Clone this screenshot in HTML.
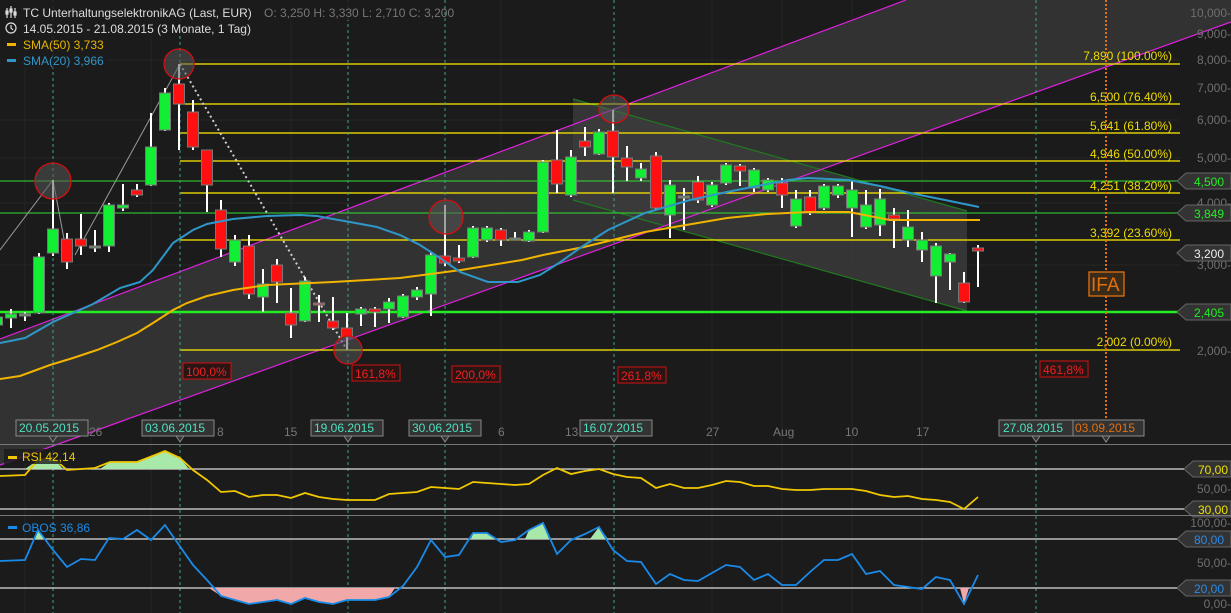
<!DOCTYPE html>
<html><head><meta charset="utf-8"><style>
body{margin:0;background:#1b1b1b;width:1231px;height:613px;overflow:hidden;font-family:"Liberation Sans",sans-serif}
svg{position:absolute;left:0;top:0}
text{font-family:"Liberation Sans",sans-serif}
</style></head><body>
<svg id="s" width="1231" height="613" viewBox="0 0 1231 613">
<rect width="1231" height="613" fill="#1b1b1b"/>
<g stroke="#262626" stroke-width="1">
<line x1="0" y1="60" x2="1180" y2="60"/><line x1="0" y1="120" x2="1180" y2="120"/><line x1="0" y1="158" x2="1180" y2="158"/><line x1="0" y1="203" x2="1180" y2="203"/><line x1="0" y1="265" x2="1180" y2="265"/><line x1="0" y1="351" x2="1180" y2="351"/>
<line x1="25" y1="0" x2="25" y2="613"/><line x1="151" y1="0" x2="151" y2="613"/><line x1="291" y1="0" x2="291" y2="613"/><line x1="501" y1="0" x2="501" y2="613"/><line x1="712" y1="0" x2="712" y2="613"/><line x1="782" y1="0" x2="782" y2="613"/><line x1="852" y1="0" x2="852" y2="613"/><line x1="922" y1="0" x2="922" y2="613"/>
</g>
<polygon points="0,339 906,0 1231,0 1231,22 0,465" fill="#353535" opacity="0.9"/>
<polygon points="573,99 967,211 967,311 573,200" fill="#3c3c3c" opacity="0.8"/>
<line x1="573" y1="99" x2="967" y2="211" stroke="#1f7a1f" stroke-width="1.2"/>
<line x1="573" y1="200" x2="967" y2="311" stroke="#1f7a1f" stroke-width="1.2"/>
<line x1="0" y1="339" x2="906" y2="0" stroke="#e020e0" stroke-width="1.2"/>
<line x1="0" y1="465" x2="1231" y2="22" stroke="#e020e0" stroke-width="1.2"/>
<g stroke="#ffee00" stroke-width="1.3">
<line x1="180" y1="64" x2="1180" y2="64"/><line x1="180" y1="104" x2="1180" y2="104"/><line x1="180" y1="133" x2="1180" y2="133"/><line x1="180" y1="161" x2="1180" y2="161"/><line x1="180" y1="193" x2="1180" y2="193"/><line x1="180" y1="240" x2="1180" y2="240"/><line x1="180" y1="350" x2="1180" y2="350"/>
</g>
<g stroke="#33dd33" stroke-width="1"><line x1="0" y1="181" x2="1180" y2="181"/><line x1="0" y1="213" x2="1180" y2="213"/></g>
<line x1="0" y1="312" x2="1180" y2="312" stroke="#22ee22" stroke-width="2.5"/>
<g fill="#eedd00" font-size="12" text-anchor="end">
<text x="1172" y="60">7,890 (100.00%)</text><text x="1172" y="101">6,500 (76.40%)</text><text x="1172" y="130">5,641 (61.80%)</text><text x="1172" y="158">4,946 (50.00%)</text><text x="1172" y="190">4,251 (38.20%)</text><text x="1172" y="237">3,392 (23.60%)</text><text x="1172" y="346">2,002 (0.00%)</text>
</g>
<g stroke="#3aa58a" stroke-width="1" stroke-dasharray="3,3">
<line x1="53" y1="0" x2="53" y2="613"/><line x1="180" y1="0" x2="180" y2="613"/><line x1="348" y1="0" x2="348" y2="613"/><line x1="445" y1="0" x2="445" y2="613"/><line x1="614" y1="0" x2="614" y2="613"/><line x1="1036" y1="0" x2="1036" y2="613"/>
</g>
<line x1="1106" y1="0" x2="1106" y2="445" stroke="#e07010" stroke-width="2" stroke-dasharray="2,2"/>
<polyline points="0,250 53,180 67,255" fill="none" stroke="#999" stroke-width="1"/>
<line x1="75" y1="255" x2="180" y2="64" stroke="#999" stroke-width="1"/>
<line x1="180" y1="64" x2="347" y2="350" stroke="#ccc" stroke-width="2" stroke-dasharray="2,3"/>
<g id="candles"></g>
<polyline fill="none" stroke="#f0b400" stroke-width="2" points="0,379 20,376 50,365 73,358 97,350 117,342 137,333 153,323 173,310 187,303 207,296 233,290 267,285 333,282 400,278 461,270 522,260 543,255 584,247 645,232 686,225 727,218 767,214 808,212 849,212 890,220 980,220"/>
<polyline fill="none" stroke="#2f97c8" stroke-width="2" points="0,343 25,338 53,322 93,304 120,288 140,282 153,270 173,243 193,230 207,224 233,219 267,216 300,215 317,216 333,219 350,222 377,227 400,235 420,245 440,258 460,272 488,282 518,282 540,275 559,263 580,248 608,230 645,213 690,200 727,192 788,180 808,178 849,180 880,186 910,193 945,200 979,207"/>
<g fill="#555" fill-opacity="0.55" stroke="#d01010" stroke-width="1.3">
<circle cx="53" cy="181" r="18"/><circle cx="179" cy="64" r="15"/><circle cx="446" cy="217" r="17"/><ellipse cx="614" cy="109" rx="15" ry="14"/><circle cx="348" cy="350" r="14"/>
</g>
<g font-size="12" fill="#ee2020">
<rect x="183" y="363" width="48" height="16" fill="#2a1515" stroke="#d01010"/><text x="186" y="376">100,0%</text>
<rect x="352" y="365" width="48" height="16" fill="#2a1515" stroke="#d01010"/><text x="355" y="378">161,8%</text>
<rect x="452" y="366" width="48" height="16" fill="#2a1515" stroke="#d01010"/><text x="455" y="379">200,0%</text>
<rect x="618" y="367" width="48" height="16" fill="#2a1515" stroke="#d01010"/><text x="621" y="380">261,8%</text>
<rect x="1040" y="361" width="48" height="16" fill="#2a1515" stroke="#d01010"/><text x="1043" y="374">461,8%</text>
</g>
<rect x="1089" y="272" width="35" height="24" fill="#3a2a18" stroke="#e07010" stroke-width="1.3"/>
<text x="1091" y="291" font-size="19" fill="#e07010">IFA</text>
<g fill="#6f6f6f" font-size="12" text-anchor="end">
<text x="1231" y="17">10,000-</text><text x="1231" y="38">9,000-</text><text x="1231" y="64">8,000-</text><text x="1231" y="92">7,000-</text><text x="1231" y="124">6,000-</text><text x="1231" y="162">5,000-</text><text x="1231" y="207">4,000-</text><text x="1231" y="269">3,000-</text><text x="1231" y="355">2,000-</text>
<text x="1231" y="493">50,00-</text><text x="1231" y="527">100,00-</text><text x="1231" y="567">50,00-</text><text x="1231" y="608">0,00-</text>
</g>
<g stroke="#666" fill="#333" stroke-width="1">
<polygon points="1177,181 1186,173 1231,173 1231,189 1186,189"/>
<polygon points="1177,213 1186,205 1231,205 1231,221 1186,221"/>
<polygon points="1177,253 1186,245 1231,245 1231,261 1186,261"/>
<polygon points="1177,312 1186,304 1231,304 1231,320 1186,320"/>
<polygon points="1184,469 1193,461 1231,461 1231,477 1193,477"/>
<polygon points="1184,509 1193,501 1231,501 1231,517 1193,517"/>
<polygon points="1177,539 1186,531 1231,531 1231,547 1186,547"/>
<polygon points="1177,588 1186,580 1231,580 1231,596 1186,596"/>
</g>
<g font-size="12" text-anchor="end">
<text x="1224" y="186" fill="#22ee22">4,500</text><text x="1224" y="218" fill="#22ee22">3,849</text><text x="1224" y="258" fill="#eee">3,200</text><text x="1224" y="317" fill="#22ee22">2,405</text>
<text x="1228" y="474" fill="#eee000">70,00</text><text x="1228" y="514" fill="#eee000">30,00</text>
<text x="1224" y="544" fill="#2a8ae8">80,00</text><text x="1224" y="593" fill="#2a8ae8">20,00</text>
</g>
<g fill="#777" font-size="12">
<text x="89" y="436">26</text><text x="217" y="436">8</text><text x="284" y="436">15</text><text x="498" y="436">6</text><text x="565" y="436">13</text><text x="706" y="436">27</text><text x="773" y="436">Aug</text><text x="845" y="436">10</text><text x="916" y="436">17</text>
</g>
<g font-size="12" fill="#50e0c0" stroke-width="1">
<g><rect x="16" y="420" width="72" height="16" fill="#333" stroke="#888"/><text x="19" y="432">20.05.2015</text><polygon points="49,436 57,436 53,442" fill="#333" stroke="#888"/></g>
<g><rect x="142" y="420" width="72" height="16" fill="#333" stroke="#888"/><text x="145" y="432">03.06.2015</text><polygon points="176,436 184,436 180,442" fill="#333" stroke="#888"/></g>
<g><rect x="311" y="420" width="72" height="16" fill="#333" stroke="#888"/><text x="314" y="432">19.06.2015</text><polygon points="344,436 352,436 348,442" fill="#333" stroke="#888"/></g>
<g><rect x="409" y="420" width="72" height="16" fill="#333" stroke="#888"/><text x="412" y="432">30.06.2015</text><polygon points="441,436 449,436 445,442" fill="#333" stroke="#888"/></g>
<g><rect x="580" y="420" width="72" height="16" fill="#333" stroke="#888"/><text x="583" y="432">16.07.2015</text><polygon points="610,436 618,436 614,442" fill="#333" stroke="#888"/></g>
<g><rect x="999" y="420" width="74" height="16" fill="#333" stroke="#888"/><text x="1003" y="432">27.08.2015</text><polygon points="1032,436 1040,436 1036,442" fill="#333" stroke="#888"/></g>
<g><rect x="1073" y="420" width="71" height="16" fill="#333" stroke="#888"/><text x="1075" y="432" fill="#e07010">03.09.2015</text><polygon points="1102,436 1110,436 1106,442" fill="#333" stroke="#888"/></g>
</g>
<line x1="0" y1="444.5" x2="1231" y2="444.5" stroke="#777"/>
<line x1="0" y1="515.5" x2="1231" y2="515.5" stroke="#777"/>
<g stroke="#ddd" stroke-width="1.3"><line x1="0" y1="469" x2="1184" y2="469"/><line x1="0" y1="509" x2="1184" y2="509"/><line x1="0" y1="539" x2="1177" y2="539"/><line x1="0" y1="588" x2="1177" y2="588"/></g>
<polygon points="25,469 38,460 53,458 63,469" fill="#a8e8a8"/>
<polygon points="100,469 110,462 137,462 150,457 165,451 180,458 189,469" fill="#a8e8a8"/>
<polyline fill="none" stroke="#f0c800" stroke-width="1.8" points="0,476 25,475 38,460 53,458 67,470 95,468 110,462 137,462 150,457 165,451 180,458 193,470 207,480 221,492 235,491 249,497 263,495 277,495 291,498 305,493 319,497 333,499 347,500 375,500 389,494 403,493 417,492 431,487 445,488 459,489 473,482 487,483 501,484 515,485 529,484 543,475 557,468 571,474 585,471 599,469 613,474 627,477 641,478 656,488 670,484 684,488 698,488 712,485 726,481 740,482 754,486 768,486 782,489 796,490 810,490 824,489 838,489 852,489 866,491 880,495 894,497 908,496 922,499 936,500 950,502 964,509 978,497"/>
<polygon points="34,539 38,530 45,539" fill="#a8e8a8"/>
<polygon points="471,539 473,533 487,533 497,539" fill="#a8e8a8"/>
<polygon points="525,539 529,530 543,523 549,539" fill="#a8e8a8"/>
<polygon points="590,539 599,527 608,539" fill="#a8e8a8"/>
<polygon points="209,588 221,596 235,600 249,604 263,602 277,600 291,604 305,598 319,602 333,604 347,600 361,600 375,600 389,597 395,588" fill="#f0a8a8"/>
<polygon points="960,588 964,604 969,588" fill="#f0a8a8"/>
<polyline fill="none" stroke="#1a8ae8" stroke-width="1.8" points="0,561 25,560 38,530 53,550 67,567 81,559 95,560 109,538 123,539 137,530 151,540 165,525 179,545 193,565 207,580 221,596 235,600 249,604 263,602 277,600 291,604 305,598 319,602 333,604 347,600 361,600 375,600 389,597 403,586 417,567 431,540 445,557 459,555 473,533 487,533 501,542 515,540 529,530 543,523 557,554 571,540 585,534 599,527 613,550 627,561 641,562 656,584 670,574 684,580 698,581 712,573 726,565 740,567 754,580 768,574 782,585 796,585 810,572 824,560 838,560 852,554 866,574 880,571 894,585 908,587 922,589 936,577 950,580 964,604 978,575"/>
<rect x="4" y="449" width="80" height="15" fill="#1b1b1b" opacity="0.8"/>
<rect x="8" y="456" width="9" height="3" fill="#f0c800"/><text x="22" y="461" font-size="12" fill="#f0c800">RSI  42,14</text>
<rect x="8" y="526" width="9" height="3" fill="#1a8ae8"/><text x="22" y="532" font-size="12" fill="#1a8ae8">OBOS  36,86</text>
<rect x="0" y="0" width="418" height="20" fill="#1b1b1b" opacity="0.85"/>
<rect x="0" y="20" width="260" height="16" fill="#1b1b1b" opacity="0.85"/>
<rect x="0" y="36" width="108" height="32" fill="#1b1b1b" opacity="0.85"/>
<g stroke="#ddd" stroke-width="1.2" fill="none">
<line x1="7" y1="8" x2="7" y2="18"/><line x1="11" y1="6" x2="11" y2="18"/><line x1="15" y1="8" x2="15" y2="18"/>
<rect x="6" y="11" width="2" height="3" fill="#ddd"/><rect x="10" y="9" width="2" height="3" fill="#ddd"/><rect x="14" y="12" width="2" height="3" fill="#ddd"/>
<circle cx="11" cy="28" r="5"/><polyline points="11,25 11,28 13,30"/>
</g>
<text x="23" y="17" font-size="12" fill="#ddd">TC UnterhaltungselektronikAG (Last, EUR)</text>
<text x="264" y="17" font-size="12" fill="#777">O: 3,250  H: 3,330  L: 2,710  C: 3,200</text>
<text x="23" y="33" font-size="12" fill="#ddd">14.05.2015 - 21.08.2015 (3 Monate, 1 Tag)</text>
<rect x="7" y="43" width="9" height="3" fill="#f0b400"/><text x="23" y="49" font-size="12" fill="#e8b400">SMA(50)  3,733</text>
<rect x="7" y="59" width="9" height="3" fill="#2f97c8"/><text x="23" y="65" font-size="12" fill="#2f97c8">SMA(20)  3,966</text>
</svg>
<script>
var d=[[-3,'g',317,325,312,328],[11,'g',314,318,309,328],[25,'d',314,314,312,321],[39,'g',257,313,253,314],[53,'g',229,253,180,256],[67,'r',239,262,233,269],[81,'r',239,246,214,255],[95,'d',246,246,230,252],[109,'g',205,246,203,252],[123,'g',205,208,184,211],[137,'r',190,195,184,197],[151,'g',147,185,113,186],[165,'g',93,130,88,131],[179,'r',84,104,64,150],[193,'r',112,147,100,150],[207,'r',150,185,150,212],[221,'r',210,249,200,257],[235,'g',240,262,235,266],[249,'r',246,294,235,299],[263,'g',284,297,269,312],[277,'r',265,282,259,303],[291,'r',313,325,288,338],[305,'g',281,321,277,322],[319,'dr',303,303,295,322],[333,'r',321,328,297,330],[347,'r',328,337,313,350],[361,'g',309,314,307,326],[375,'r',309,312,307,327],[389,'g',302,309,298,323],[403,'g',296,317,294,318],[417,'g',290,297,287,300],[431,'g',255,294,253,316],[445,'r',256,263,205,266],[459,'r',258,261,245,263],[473,'g',228,257,226,258],[487,'g',228,240,226,242],[501,'r',230,240,228,246],[515,'d',238,238,232,240],[529,'g',232,241,230,242],[543,'g',162,232,160,233],[557,'r',160,184,130,193],[571,'g',157,195,150,197],[585,'r',141,147,127,156],[599,'g',132,154,129,155],[613,'r',131,157,110,193],[627,'r',158,167,146,181],[641,'g',169,178,163,181],[656,'r',156,208,152,210],[670,'g',185,215,180,238],[684,'d',196,196,188,230],[698,'r',182,200,176,203],[712,'g',185,205,182,207],[726,'g',165,183,163,185],[740,'r',166,171,164,186],[754,'g',170,188,168,192],[768,'g',180,190,178,192],[782,'r',183,195,178,208],[796,'g',199,226,190,228],[810,'r',197,213,190,215],[824,'g',186,208,184,210],[838,'g',186,195,184,198],[852,'g',190,208,180,237],[866,'g',205,227,190,229],[880,'g',199,225,189,236],[894,'r',215,219,208,248],[908,'g',227,240,210,247],[922,'g',240,250,232,262],[936,'g',246,276,243,303],[950,'g',254,262,253,290],[964,'r',283,302,272,303],[978,'r',248,251,245,287]];
var g=document.getElementById('candles'),h='';
d.forEach(function(c){var x=c[0];h+='<rect x="'+(x-1)+'" y="'+c[4]+'" width="2" height="'+(c[5]-c[4])+'" fill="#fff"/>';
var col=c[1]=='g'?'#11ee33':(c[1]=='r'?'#ff1010':(c[1]=='dr'?'#c05050':'#6a8a6a'));
var hh=Math.max(2,c[3]-c[2]);h+='<rect x="'+(x-5.5)+'" y="'+c[2]+'" width="11" height="'+hh+'" fill="'+col+'" stroke="#777" stroke-width="1"/>';});
g.innerHTML=h;
</script>
</body></html>
